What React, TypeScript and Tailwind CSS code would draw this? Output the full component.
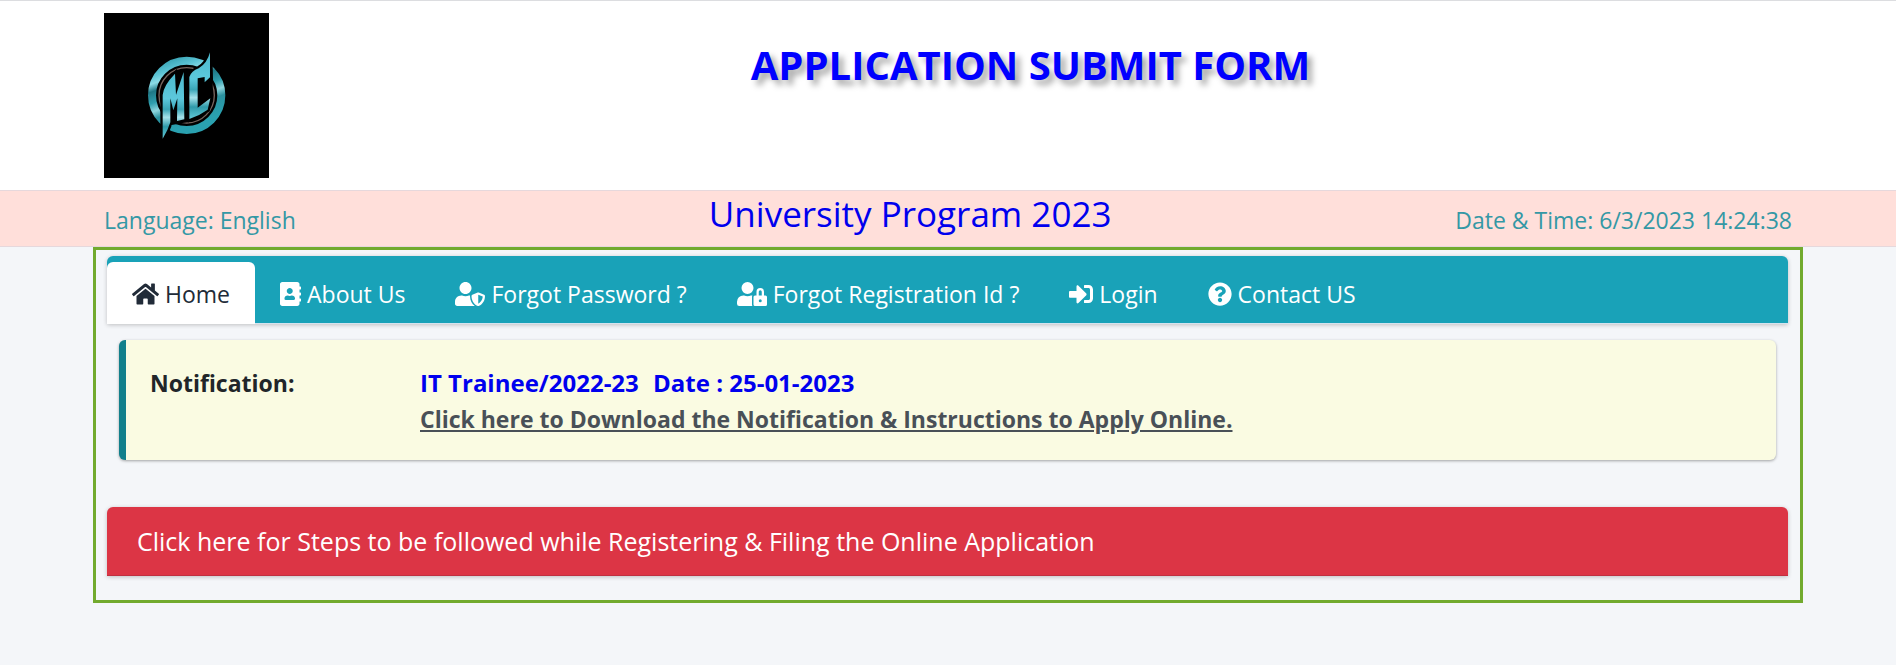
import type { ReactNode } from "react";
import {
  FaAddressBook,
  FaHome,
  FaQuestionCircle,
  FaSignInAlt,
  FaUserLock,
  FaUserShield,
} from "react-icons/fa";

function Logo() {
  return (
    <svg viewBox="0 0 495 495" className="size-[165px] shrink-0" role="img" aria-label="MC emblem">
      <defs>
        <linearGradient id="ring" x1="0" y1="0" x2="0.35" y2="1">
          <stop offset="0" stopColor="#2a97a8" />
          <stop offset="0.2" stopColor="#5cc3d4" />
          <stop offset="0.3" stopColor="#8bdce6" />
          <stop offset="0.4" stopColor="#1f7785" />
          <stop offset="0.55" stopColor="#2f9fae" />
          <stop offset="0.66" stopColor="#8fd6de" />
          <stop offset="0.76" stopColor="#2b929f" />
          <stop offset="1" stopColor="#2aa1b0" />
        </linearGradient>
        <linearGradient id="blade" x1="0" y1="0" x2="0" y2="1">
          <stop offset="0" stopColor="#4cb8cc" />
          <stop offset="0.4" stopColor="#5cc8dc" />
          <stop offset="0.56" stopColor="#3aa5b6" />
          <stop offset="0.68" stopColor="#a5e2ea" />
          <stop offset="0.82" stopColor="#2f9aa9" />
          <stop offset="1" stopColor="#62c9d8" />
        </linearGradient>
      </defs>
      <rect width="495" height="495" fill="#000" />
      <circle cx="248" cy="247" r="104" fill="none" stroke="url(#ring)" strokeWidth="24" />
      <circle cx="248" cy="247" r="83" fill="none" stroke="#78655f" strokeWidth="4" />
      <g stroke="#000" strokeWidth="14" strokeLinejoin="miter" strokeMiterlimit="3" fill="#000">
        <path d="M176 377 L176 246 Q177 214 213 182 L216 248 L240 177 L241 322 L198 330 Q192 352 176 377Z" />
        <path d="M256 192 Q262 174 284 166 Q309 152 318 118 L320 196 L318 256 L311 290 L258 318Z" />
      </g>
      <g fill="url(#blade)">
        <path d="M176 377 L176 246 Q178 218 213 182 L216 246 L239 177 L241 319 L219 324 L220 256 L208 292 L199 256 L199 328 Q192 352 176 377Z" />
        <path d="M256 192 Q262 174 284 166 Q309 152 318 118 L318 193 L302 208 L302 192 L281 196 L281 284 L319 256 L311 290 Q286 308 256 318Z" />
      </g>
    </svg>
  );
}

function NavItem({ icon, label, active = false }: { icon: ReactNode; label: string; active?: boolean }) {
  return (
    <a
      href="#"
      aria-current={active ? "page" : undefined}
      className={
        active
          ? "-mb-px flex items-center gap-1.5 rounded-t-md bg-white px-[25px] pt-0.5 text-[#212b38]"
          : "-mb-px flex items-center gap-1.5 px-[25px] pt-0.5 text-white"
      }
    >
      {icon}
      <span>{label}</span>
    </a>
  );
}

export default function App() {
  return (
    <div className="min-h-screen border-t border-[#dcdde0] bg-[#f4f6f9] font-['Open_Sans','Noto_Sans',sans-serif] text-[23px] leading-9 text-[#212529]">
      <header className="bg-white">
        <div className="mx-auto flex max-w-[1710px] px-[11px] py-3">
          <Logo />
          <h1 className="flex-1 pt-[22px] text-center text-[40px] leading-[60px] font-bold text-[#0000ff] [text-shadow:5px_5px_6px_rgba(0,0,0,0.35)]">
            APPLICATION SUBMIT FORM
          </h1>
        </div>
      </header>

      <div className="border-y border-[#e6d8dc] bg-[#ffdfda]">
        <div className="mx-auto flex h-[55px] max-w-[1710px] items-end px-[11px] pb-2 text-[#3498a5]">
          <p className="w-[261px]">Language: English</p>
          <h2 className="flex-1 pb-1.5 text-center text-[35px] font-medium text-[#0000ee]">University Program 2023</h2>
          <p>Date &amp; Time: 6/3/2023 14:24:38</p>
        </div>
      </div>

      <main className="mx-auto max-w-[1710px] border-3 border-[#72aa2e] pt-1.5 pr-3 pb-6 pl-[11px]">
        <nav className="flex h-[68px] rounded-t-md border-b border-[#d5e3ee] bg-[#19a2b8] pt-1.5 shadow-[0_1px_4px_rgba(0,0,0,0.22)]">
          <NavItem active icon={<FaHome className="h-6 w-[27px]" />} label="Home" />
          <NavItem icon={<FaAddressBook className="h-6 w-[21px]" />} label="About Us" />
          <NavItem icon={<FaUserShield className="h-6 w-[30px]" />} label="Forgot Password ?" />
          <NavItem icon={<FaUserLock className="h-6 w-[30px]" />} label="Forgot Registration Id ?" />
          <NavItem icon={<FaSignInAlt className="size-6" />} label="Login" />
          <NavItem icon={<FaQuestionCircle className="size-6" />} label="Contact US" />
        </nav>

        <section className="mx-3 mt-4 flex rounded-md border-l-7 border-[#117f8b] bg-[#fafbe2] px-6 pt-[25px] pb-[23px] font-bold shadow-[0_1px_3px_rgba(0,0,0,0.35)]">
          <h3 className="w-[270px]">Notification:</h3>
          <div>
            <p className="text-2xl leading-9 text-[#0000ee]">
              IT Trainee/2022-23 <span className="ml-2">Date : 25-01-2023</span>
            </p>
            <a href="#" className="text-[#495057] underline">
              Click here to Download the Notification &amp; Instructions to Apply Online.
            </a>
          </div>
        </section>

        <button
          type="button"
          className="mt-[47px] block w-full rounded-t-md border-b border-[#c03040] bg-[#dc3545] px-[30px] py-4 text-left text-[25px] leading-9 text-white shadow-[0_1px_4px_rgba(0,0,0,0.22)]"
        >
          Click here for Steps to be followed while Registering &amp; Filing the Online Application
        </button>
      </main>
    </div>
  );
}
